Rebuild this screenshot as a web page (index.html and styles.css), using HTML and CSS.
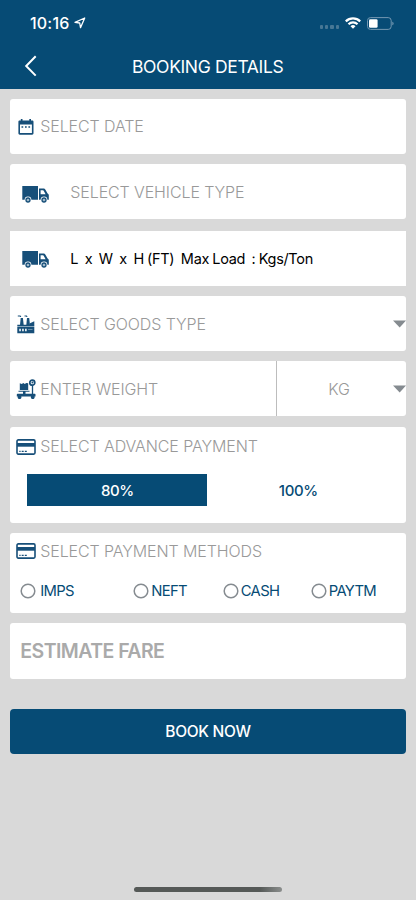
FILE: index.html
```
<!DOCTYPE html>
<html lang="en">
<head>
<meta charset="utf-8">
<meta name="viewport" content="width=device-width, initial-scale=1">
<title>Booking Details</title>
<link rel="stylesheet" href="styles.css">
</head>
<body>
<svg class="defs" width="0" height="0" aria-hidden="true">
  <symbol id="truck" viewBox="0 0 27 18">
    <path d="M.3 1h15.700v13.800H.3zM17 3.600h4.300c1 0 1.700.5 2.300 1.400l2 3.400c.8.3 1.200.9 1.200 1.700v4.700H17zM18.600 5.200v4h5l-1.900-3.400a.9.9 0 0 0-.8-.6z" fill="#174f79" fill-rule="evenodd"/>
    <circle cx="6" cy="15" r="2.300" fill="#9fb8c9" stroke="#fff" stroke-width="2.200"/>
    <circle cx="6" cy="15" r="2" fill="#9fb8c9" stroke="#174f79" stroke-width="1.300"/>
    <circle cx="22" cy="15" r="2.300" fill="#9fb8c9" stroke="#fff" stroke-width="2.200"/>
    <circle cx="22" cy="15" r="2" fill="#9fb8c9" stroke="#174f79" stroke-width="1.300"/>
  </symbol>
  <symbol id="card" viewBox="0 0 20 16">
    <rect x="1" y=".9" width="18" height="14.200" rx="1.300" fill="#fff" stroke="#174f79" stroke-width="1.600"/>
    <path d="M1 4h18v3.700H1z" fill="#174f79"/>
    <path d="M3.300 12.300h1.300M5.700 12.300h2M8.800 12.300h2" stroke="#174f79" stroke-width="1.200"/>
  </symbol>
</svg>
<header class="header">
  <div class="status">
    <span class="time">10:16</span>
    <svg class="location" width="12" height="12" viewBox="0 0 12 12"><path d="M1 5.400 10.700 1 6.500 10.700 5.700 6z" fill="none" stroke="#fff" stroke-width="1.300" stroke-linejoin="round"/></svg>
    <div class="signal"><i></i><i></i><i></i><i></i></div>
    <svg class="wifi" width="16" height="12" viewBox="0 0 16 12"><path d="M.8 4.400a10.200 10.200 0 0 1 14.400 0M3.500 7.300a6.400 6.400 0 0 1 9 0" fill="none" stroke="#fff" stroke-width="2.200"/><path d="M5.500 9.200a3.600 3.600 0 0 1 5 0L8 11.800z" fill="#fff"/></svg>
    <svg class="battery" width="27" height="13" viewBox="0 0 27 13"><rect x=".5" y=".6" width="23.700" height="11.800" rx="3" fill="none" stroke="#7397b1"/><path d="M25.300 4.700v3.600c1-.3 1.300-1 1.300-1.800s-.3-1.500-1.300-1.800z" fill="#7397b1"/><rect x="2" y="2.200" width="8.600" height="8.600" rx="1.300" fill="#fff"/></svg>
  </div>
  <div class="nav">
    <svg class="back" width="14" height="22" viewBox="0 0 14 22"><path d="M11.700 1.300 2.200 11l9.500 9.600" fill="none" stroke="#fff" stroke-width="2"/></svg>
    <h1 class="title">BOOKING DETAILS</h1>
  </div>
</header>
<main class="form">
  <section class="field">
    <svg class="icon" width="20" height="20" viewBox="0 0 20 20"><path d="M3.800 3.400h1V2h1.700v1.400h6.800V2H15v1.400h1.100c.9 0 1.400.5 1.400 1.300v11.600c0 .9-.5 1.400-1.400 1.400H3.800c-.9 0-1.400-.5-1.400-1.400V4.700c0-.8.5-1.300 1.400-1.300zm.2 4.200v8.500h11.900V7.600z" fill="#174f79" fill-rule="evenodd"/><path d="M5.500 9.200h1.700v1.500H5.500zm3.500 0h1.700v1.500H9zm3.400 0h1.700v1.500h-1.700z" fill="#174f79"/></svg>
    <span class="label date">SELECT DATE</span>
  </section>
  <section class="field vehicle">
    <svg class="truck" width="27" height="18"><use href="#truck"/></svg>
    <span class="label vtype">SELECT VEHICLE TYPE</span>
  </section>
  <section class="field vehicle capacity">
    <svg class="truck" width="27" height="18"><use href="#truck"/></svg>
    <span class="dims">L&nbsp; x&nbsp; W&nbsp; x&nbsp; H (FT)&nbsp; Max Load&nbsp; : Kgs/Ton</span>
  </section>
  <section class="field goods">
    <svg class="icon" width="20" height="20" viewBox="0 0 20 20"><path d="M1.300 13h17v6.200h-17zM1.300 10.800h17v1.700h-17zM4.700 4h2.200l.8 7H4zM11 4h2.200l.8 7h-3.700zM14 11V9.300l4.300-2V11zM1.800 1.500h2.700L5.300 3H4.200l-.5-.6H1.800zM8.500 1.500h2.300l.8 1.500h-1.100l-.5-.6H8.500z" fill="#174f79"/><path d="M3.200 14.800h1.700v2.500H3.200zm2.900 0h1.700v2.500H6.100zm2.900 0h1.700v2.500H9z" fill="#e6eef3"/><path d="M12 15h4.500v.7H12z" fill="#8fabc0"/></svg>
    <span class="label gtype">SELECT GOODS TYPE</span>
    <svg class="arrow" width="13" height="8" viewBox="0 0 13 8"><path d="M0 .5h13L6.700 7.500z" fill="#858b90"/></svg>
  </section>
  <section class="field weight">
    <div class="amount">
      <svg class="icon" width="20" height="20" viewBox="0 0 20 20"><path d="M1.500 14.800h17.300c.5 0 .7.300.7.700v2h-1a1.900 1.900 0 1 1-3.500 0H5.300a1.900 1.900 0 1 1-3.500 0h-1v-2c0-.4.300-.7.700-.7zM3.800 4.300l2 .8 1.500-1.200L8.800 5l1.500-1.100 1.900.4V11H3.800zM2.500 11.800h11v1h-11zM7 12.500h2.500V15H7z" fill="#174f79"/><circle cx="16.300" cy="3.700" r="2.500" fill="#fff" stroke="#174f79" stroke-width="1.700"/><path d="m15.700 4.300 1.500-1.600M16.500 6v9" stroke="#174f79" stroke-width="1.300"/></svg>
      <span class="label wtext">ENTER WEIGHT</span>
    </div>
    <div class="unit"><span class="label kg">KG</span>
    <svg class="arrow" width="13" height="8" viewBox="0 0 13 8"><path d="M0 .5h13L6.700 7.500z" fill="#858b90"/></svg></div>
  </section>
  <section class="panel advance">
    <div class="heading"><svg class="icon" width="20" height="16"><use href="#card"/></svg><span class="label adv">SELECT ADVANCE PAYMENT</span></div>
    <div class="choices"><div class="choice selected"><span>80%</span></div><div class="choice"><span>100%</span></div></div>
  </section>
  <section class="panel methods">
    <div class="heading"><svg class="icon" width="20" height="16"><use href="#card"/></svg><span class="label meth">SELECT PAYMENT METHODS</span></div>
    <div class="radios">
      <div class="radio"><svg width="16" height="16" viewBox="0 0 16 16"><circle cx="8" cy="8" r="6.800"/></svg><span>IMPS</span></div>
      <div class="radio"><svg width="16" height="16" viewBox="0 0 16 16"><circle cx="8" cy="8" r="6.800"/></svg><span>NEFT</span></div>
      <div class="radio"><svg width="16" height="16" viewBox="0 0 16 16"><circle cx="8" cy="8" r="6.800"/></svg><span>CASH</span></div>
      <div class="radio"><svg width="16" height="16" viewBox="0 0 16 16"><circle cx="8" cy="8" r="6.800"/></svg><span>PAYTM</span></div>
    </div>
  </section>
  <section class="field fare"><span>ESTIMATE FARE</span></section>
  <button class="book" type="button">BOOK NOW</button>
</main>
<footer class="footer"><div class="home"></div></footer>
</body>
</html>
```
FILE: styles.css
```
* { box-sizing: border-box; }
html, body { height: 100%; }
body {
  margin: 0;
  display: flex;
  flex-direction: column;
  background: #d9d9d9;
  font-family: Inter, "Liberation Sans", sans-serif;
  overflow: hidden;
}
svg { display: block; flex: none; }
.defs { position: absolute; }
span, h1 { white-space: nowrap; }
.header { height: 88.600px; background: #064b75; color: #fff; flex: none; }
.status { height: 44px; display: flex; align-items: center; padding: 2px 22px 0 30px; }
.time { font-size: 16px; font-weight: 500; letter-spacing: .2px; width: 41px; }
.location { margin-left: 3px; }
.signal { display: flex; gap: 2px; margin: 8px 6px 0 auto; }
.signal i { width: 3.300px; height: 3.300px; border-radius: 1px; background: #477795; }
.battery { margin-left: 6px; }
.nav { height: 44px; display: grid; grid-template-columns: 132px 1fr; align-items: center; }
.back { margin-left: 24px; }
.title { margin: 0; font-size: 17.500px; font-weight: 400; letter-spacing: -.36px; }
.form { padding: 10.200px 10.300px 0; display: flex; flex-direction: column; }
.field, .panel { background: #fff; border-radius: 3px; }
.field { height: 55.200px; margin-bottom: 10.200px; display: flex; align-items: center; }
.icon { margin: 1px 0 0 5.300px; }
.label { font-size: 16px; line-height: 20px; font-weight: 300; color: #999; margin-left: 4.700px; letter-spacing: -.11px; }
.truck { margin: 4px 0 0 11.500px; }
.vehicle .label, .dims { margin-left: 21.500px; }
.capacity { border-radius: 0; margin-top: 1.300px; margin-bottom: 9.800px; }
.capacity .truck { margin-top: 1px; }
.dims { font-size: 14.500px; color: #000; letter-spacing: -.32px; word-spacing: -.5px; }
.goods .label { margin-top: 1px; }
.arrow { margin-left: auto; }
.goods .arrow { margin-top: 2px; }
.amount { width: 267px; height: 100%; border-right: 1px solid #bdbdbd; display: flex; align-items: center; }
.unit { flex: 1; display: flex; align-items: center; }
.unit .kg { margin-left: 51px; }
.advance { height: 96px; margin-bottom: 10.200px; padding-top: 9.500px; }
.heading { height: 20px; display: flex; align-items: center; }
.choices { display: grid; grid-template-columns: 180px 182px; margin: 17.500px 0 0 17px; height: 32px; }
.choice { display: flex; align-items: center; justify-content: center; padding-top: 1px; color: #064b75; font-size: 15px; font-weight: 500; letter-spacing: -.4px; }
.selected { background: #064b75; color: #fff; }
.methods { height: 80.400px; margin-bottom: 10.200px; padding-top: 8px; }
.radios { display: grid; grid-template-columns: 113.500px 89.500px 88px 1fr; margin: 19px 0 0 9.500px; height: 22px; align-items: center; }
.radio { display: flex; align-items: center; gap: 2px; font-size: 14.800px; color: #064b75; letter-spacing: -.7px; }
.radio:first-child { gap: 4.500px; }
.radio svg { fill: none; stroke: #858b90; stroke-width: 1.500; }
.fare { padding-left: 10px; margin-bottom: 30px; color: #aaa; font-size: 19.500px; font-weight: 600; letter-spacing: -.55px; }
.book { height: 45.200px; padding: 1px 0 0; border: 0; border-radius: 4px; background: #064b75; color: #fff; font: 500 15.500px Inter, "Liberation Sans", sans-serif; letter-spacing: -.3px; }
.footer { margin-top: auto; padding-bottom: 8.500px; display: flex; justify-content: center; }
.home { width: 148px; height: 5px; border-radius: 3px; background: linear-gradient(90deg, #555957 85%, #8b8e8d); }
```
